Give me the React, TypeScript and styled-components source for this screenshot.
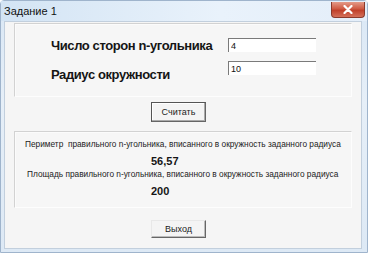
import React from "react";
import styled, { createGlobalStyle } from "styled-components";

const GlobalStyle = createGlobalStyle`
  html, body {
    margin: 0;
    padding: 0;
    background: #ffffff;
  }
  * {
    box-sizing: border-box;
  }
`;

const Window = styled.div`
  width: 368px;
  height: 253px;
  display: flex;
  flex-direction: column;
  background: linear-gradient(to bottom, #d9e7f5, #e6eff8 40%, #dde9f5);
  border: 1px solid #9fb4cc;
  border-radius: 4px 4px 0 0;
  font-family: "Liberation Sans", Arial, sans-serif;
  color: #1a1a1a;
`;

const TitleBar = styled.div`
  height: 20px;
  display: flex;
  align-items: center;
  justify-content: space-between;
  padding: 0 2px 0 3px;
  background: linear-gradient(to right, #d3e4f4, #e9f2fb 60%, #e4eef9);
`;

const Title = styled.span`
  font-size: 11px;
  color: #111;
  margin-top: -1px;
`;

const CloseButton = styled.div`
  width: 34px;
  height: 16px;
  margin-top: -3px;
  border: 1px solid #8a3a2c;
  border-top: none;
  border-radius: 0 0 4px 4px;
  background: linear-gradient(to bottom, #e49a88, #cf5a43 45%, #c0402a 55%, #d4705a);
  display: flex;
  align-items: center;
  justify-content: center;
`;

const Client = styled.div`
  flex: 1;
  margin: 0 5px 3px 3px;
  background: #f5f5f5;
  border: 1px solid #c2cfdd;
  display: flex;
  flex-direction: column;
  padding: 1px 9px 0 9px;
`;

const Panel = styled.div<{ $height: number }>`
  height: ${(p) => p.$height}px;
  border: 1px solid #d2d2d2;
  border-right-color: #fdfdfd;
  border-bottom-color: #fdfdfd;
  box-shadow: inset 1px 1px 0 #fbfbfb;
  background: #f6f6f6;
`;

const InputPanel = styled(Panel)`
  display: flex;
  padding: 0 0 0 36px;
`;

const LabelColumn = styled.div`
  display: flex;
  flex-direction: column;
  gap: 11px;
  width: 177px;
  padding-top: 13px;
`;

const Label = styled.div`
  font-weight: bold;
  font-size: 13px;
  letter-spacing: -0.4px;
  line-height: 18px;
  color: #151515;
  white-space: nowrap;
`;

const InputColumn = styled.div`
  display: flex;
  flex-direction: column;
  gap: 9px;
  padding-top: 14px;
`;

const Field = styled.input`
  width: 88px;
  height: 14px;
  padding: 0 2px;
  border: none;
  border-top: 1px solid #7a7a7a;
  border-left: 1px solid #7a7a7a;
  background: #ffffff;
  font-family: "Liberation Sans", Arial, sans-serif;
  font-size: 9px;
  color: #111;
  outline: none;
`;

const ButtonRow = styled.div<{ $top: number; $bottom: number }>`
  display: flex;
  padding-left: 137px;
  margin-top: ${(p) => p.$top}px;
  margin-bottom: ${(p) => p.$bottom}px;
`;

const Button = styled.button<{ $focused?: boolean }>`
  width: 55px;
  height: ${(p) => (p.$focused ? 20 : 18)}px;
  padding: 0;
  background: #f4f4f4;
  border: 1px solid ${(p) => (p.$focused ? "#555" : "#e8e8e8")};
  border-right-color: #666;
  border-bottom-color: #666;
  box-shadow: ${(p) =>
    p.$focused ? "inset -1px -1px 0 #aaa, inset 1px 1px 0 #fff" : "inset -1px -1px 0 #bbb"};
  font-family: "Liberation Sans", Arial, sans-serif;
  font-size: 9px;
  color: #222;
  cursor: pointer;
`;

const ResultPanel = styled(Panel)`
  display: flex;
  flex-direction: column;
  align-items: flex-start;
  padding: 6px 0 0 10px;
`;

const Caption = styled.div<{ $indent: number }>`
  font-size: 8.3px;
  line-height: 12px;
  color: #222;
  white-space: pre;
  margin-left: ${(p) => p.$indent}px;
`;

const Value = styled.div`
  font-weight: bold;
  font-size: 11px;
  line-height: 14px;
  color: #151515;
  margin: 4px 0 0 126px;
`;

export default function App() {
  return (
    <>
      <GlobalStyle />
      <Window>
        <TitleBar>
          <Title>Задание 1</Title>
          <CloseButton>
            <svg width="10" height="9" viewBox="0 0 10 9">
              <path
                d="M1.5 1 L8.5 8 M8.5 1 L1.5 8"
                stroke="#ffffff"
                strokeWidth="2.2"
                strokeLinecap="round"
              />
            </svg>
          </CloseButton>
        </TitleBar>
        <Client>
          <InputPanel $height={74}>
            <LabelColumn>
              <Label>Число сторон n-угольника</Label>
              <Label>Радиус окружности</Label>
            </LabelColumn>
            <InputColumn>
              <Field defaultValue="4" />
              <Field defaultValue="10" />
            </InputColumn>
          </InputPanel>
          <ButtonRow $top={5} $bottom={9}>
            <Button $focused>Считать</Button>
          </ButtonRow>
          <ResultPanel $height={77}>
            <Caption $indent={0}>
              Периметр  правильного n-угольника, вписанного в окружность заданного радиуса
            </Caption>
            <Value>56,57</Value>
            <Caption $indent={2}>
              Площадь правильного n-угольника, вписанного в окружность заданного радиуса
            </Caption>
            <Value>200</Value>
          </ResultPanel>
          <ButtonRow $top={12} $bottom={0}>
            <Button>Выход</Button>
          </ButtonRow>
        </Client>
      </Window>
    </>
  );
}
